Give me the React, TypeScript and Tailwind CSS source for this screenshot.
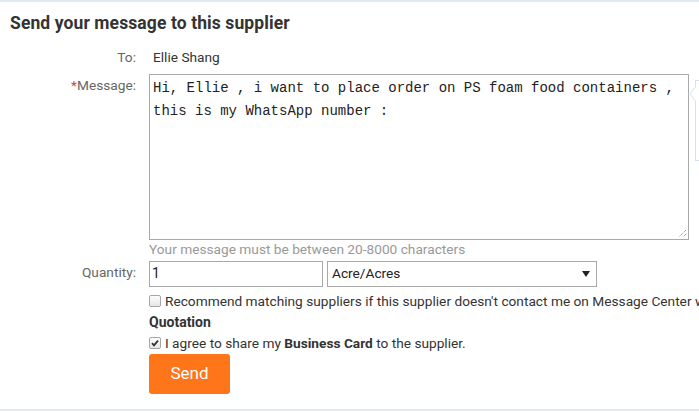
import React from "react";

function Box({ checked }: { checked?: boolean }) {
  return (
    <span className="inline-flex h-[12px] w-[12px] shrink-0 items-center justify-center rounded-[2px] border border-[#a6a6a6] bg-gradient-to-b from-[#fdfdfd] to-[#e6e6e6]">
      {checked && (
        <svg width="10" height="10" viewBox="0 0 10 10">
          <path d="M2 5.2 L4 7.3 L8 2.6" fill="none" stroke="#333" strokeWidth="1.8" />
        </svg>
      )}
    </span>
  );
}

export default function App() {
  const label = "w-[137px] shrink-0 pr-[1px] text-right text-[13.7px] text-[#666]";
  return (
    <div
      className="relative h-[413px] w-[699px] overflow-hidden bg-white text-[#333]"
      style={{ fontFamily: "Roboto, 'Liberation Sans', sans-serif" }}
    >
      <div className="h-[2px] w-full bg-[#e3e9f3]" />
      <div className="pl-[10px] pt-[11px] text-[17.5px] font-bold leading-[21px] tracking-[0.1px] text-[#333]">
        Send your message to this supplier
      </div>
      <div className="mt-[13px] flex items-center">
        <div className={label}>To:</div>
        <div className="pl-[16px] text-[13.7px] text-[#333]">Ellie Shang</div>
      </div>
      <div className="mt-[6px] flex items-start">
        <div className={label + " pt-[1px]"}>
          <span className="text-[#e4393c]">*</span>Message:
        </div>
        <div className="ml-[12px] flex flex-col">
          <div className="relative h-[166px] w-[540px] border border-[#a9a9a9] px-[3px] pt-[2px]">
            <div
              className="text-[14px] leading-[23px] text-[#222]"
              style={{ fontFamily: "'Liberation Mono', 'Courier New', monospace" }}
            >
              Hi, Ellie , i want to place order on PS foam food containers ,
              <br />
              this is my WhatsApp number :
            </div>
            <svg className="absolute bottom-[1px] right-[1px]" width="10" height="10" viewBox="0 0 10 10">
              <path d="M9 2 L2 9 M9 6 L6 9" stroke="#777" strokeWidth="1" strokeDasharray="1 1" />
            </svg>
          </div>
          <div className="text-[13.7px] leading-[18px] text-[#999]">
            Your message must be between 20-8000 characters
          </div>
        </div>
      </div>
      <div className="mt-[3px] flex items-start">
        <div className={label + " pt-[1px]"}>Quantity:</div>
        <div className="ml-[12px] flex gap-[4px]">
          <div className="flex h-[26px] w-[174px] items-center border border-[#a9a9a9] px-[2px] text-[14px] text-[#222]">
            1
          </div>
          <div className="flex h-[26px] w-[270px] items-center justify-between border border-[#a9a9a9] pl-[4px] pr-[6px] text-[13.7px] text-[#222]">
            <span>Acre/Acres</span>
            <svg width="8" height="6" viewBox="0 0 8 6">
              <path d="M0 0 H8 L4 6 Z" fill="#222" />
            </svg>
          </div>
        </div>
      </div>
      <div className="ml-[149px] mt-[5px] flex items-center gap-[4px] whitespace-nowrap text-[13.7px] leading-[18px] text-[#333]">
        <Box />
        <span>Recommend matching suppliers if this supplier doesn't contact me on Message Center within 24 hours.</span>
      </div>
      <div className="ml-[149px] mt-[3px] text-[14px] font-bold leading-[18px] text-[#333]">Quotation</div>
      <div className="ml-[149px] mt-[3px] flex items-center gap-[4px] text-[13.7px] leading-[18px] text-[#333]">
        <Box checked />
        <span>
          I agree to share my <b>Business Card</b> to the supplier.
        </span>
      </div>
      <div className="ml-[149px] mt-[2px] flex h-[40px] w-[81px] items-center justify-center rounded-[3px] bg-[#ff7519] text-[17px] text-white">
        Send
      </div>
      <div className="absolute bottom-[2px] left-0 h-[2px] w-full bg-[#e3e9f3]" />
      <div className="absolute left-[695px] top-[80px] h-[81px] w-[20px] border border-[#d5e1f2] bg-white" />
      <svg className="absolute left-[689px] top-[86px]" width="8" height="16" viewBox="0 0 8 16">
        <path d="M7 0 L1 8 L7 16" fill="white" stroke="#d5e1f2" strokeWidth="1" />
      </svg>
    </div>
  );
}
